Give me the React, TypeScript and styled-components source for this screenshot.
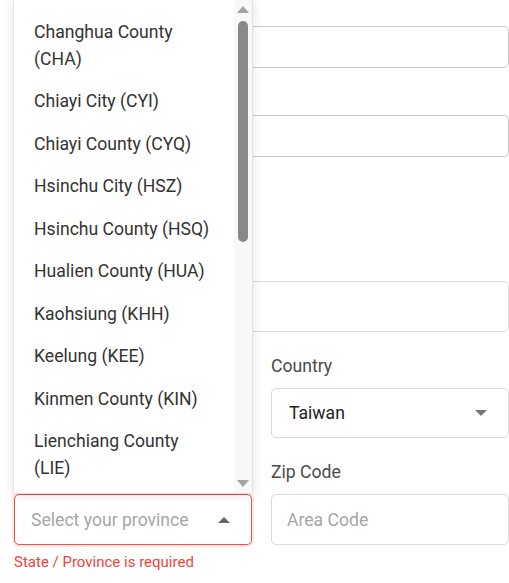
import React from "react";
import styled, { createGlobalStyle } from "styled-components";

const Global = createGlobalStyle`
  html, body { margin: 0; padding: 0; background: #fff; }
  body { font-family: Roboto, "Noto Sans", Arial, sans-serif; overflow: hidden; }
  * { box-sizing: border-box; }
`;

const Page = styled.div`
  width: 509px;
  height: 583px;
  padding: 26px 0 0 14px;
  overflow: hidden;
`;

const Form = styled.form`
  display: flex;
  flex-direction: column;
`;

const Field = styled.div<{ $top?: number }>`
  display: flex;
  flex-direction: column;
  margin-top: ${(p) => p.$top ?? 0}px;
  position: relative;
`;

const Label = styled.label`
  font-size: 17.6px;
  line-height: 22px;
  color: #4a4a4a;
  margin-bottom: 11px;
`;

const TextInput = styled.input<{ $compact?: boolean }>`
  height: ${(p) => (p.$compact ? 42 : 51)}px;
  border: 1px solid ${(p) => (p.$compact ? "#c9c9c9" : "#dadada")};
  border-radius: 5px;
  padding: 0 15px;
  font: inherit;
  font-size: 17.6px;
  color: #222;
  background: #fff;
  outline: none;
  &::placeholder { color: #a6a6a6; }
`;

const Grid = styled.div`
  display: grid;
  grid-template-columns: 238px 238px;
  column-gap: 19px;
  row-gap: 23px;
  margin-top: 23px;
`;

const SelectBox = styled.div<{ $error?: boolean; $h?: number }>`
  height: ${(p) => p.$h ?? 51}px;
  border: 1px solid ${(p) => (p.$error ? "#f0524a" : "#dadada")};
  border-radius: 5px;
  box-shadow: ${(p) => (p.$error ? "0 0 0 2px rgba(244, 82, 74, 0.14)" : "none")};
  display: flex;
  align-items: center;
  justify-content: space-between;
  padding: 0 21px 0 16px;
  background: #fff;
  position: relative;
`;

const SelectValue = styled.span<{ $placeholder?: boolean }>`
  font-size: 17.6px;
  color: ${(p) => (p.$placeholder ? "#a6a6a6" : "#222")};
  padding-left: ${(p) => (p.$placeholder ? 0 : 1)}px;
`;

const Caret = styled.svg`
  width: 12px;
  height: 6px;
  flex: none;
`;

const ErrorText = styled.div`
  margin-top: 8px;
  font-size: 15px;
  line-height: 18px;
  color: #f0443a;
`;

const Menu = styled.div`
  position: absolute;
  left: -2px;
  bottom: calc(100% + 2px);
  width: 240px;
  height: 493px;
  background: #fff;
  border-left: 1px solid #e6e6e6;
  border-right: 1px solid #e2e2e2;
  box-shadow: 0 2px 10px rgba(0, 0, 0, 0.12);
  display: grid;
  grid-template-columns: 1fr 18px;
  z-index: 10;
`;

const List = styled.ul`
  list-style: none;
  margin: 0;
  padding: 11px 0 0;
  overflow: hidden;
`;

const Item = styled.li`
  font-size: 17.6px;
  line-height: 26.5px;
  padding: 8px 19px 8px 20px;
  color: #333;
`;

const Track = styled.div`
  background: #f8f8f8;
  display: flex;
  flex-direction: column;
  align-items: center;
  padding: 6px 0 6px;
`;

const Thumb = styled.div`
  width: 10px;
  height: 221px;
  border-radius: 5px;
  background: #898989;
  margin-top: 8px;
`;

const Spacer = styled.div`
  flex: 1;
`;

const Arrow = styled.svg`
  width: 12px;
  height: 7px;
  flex: none;
`;

const provinces = [
  "Changhua County (CHA)",
  "Chiayi City (CYI)",
  "Chiayi County (CYQ)",
  "Hsinchu City (HSZ)",
  "Hsinchu County (HSQ)",
  "Hualien County (HUA)",
  "Kaohsiung (KHH)",
  "Keelung (KEE)",
  "Kinmen County (KIN)",
  "Lienchiang County (LIE)",
];

export default function App() {
  return (
    <Page>
      <Global />
      <Form>
        <Field>
          <TextInput $compact aria-label="Street address" />
        </Field>
        <Field $top={47}>
          <TextInput $compact aria-label="Apartment" />
        </Field>
        <Field $top={124}>
          <TextInput aria-label="City" />
        </Field>
        <Grid>
          <div />
          <Field>
            <Label>Country</Label>
            <SelectBox $h={50}>
              <SelectValue>Taiwan</SelectValue>
              <Caret viewBox="0 0 12 6">
                <path d="M0 0h12L6 6z" fill="#777" />
              </Caret>
            </SelectBox>
          </Field>
          <Field $top={33}>
            <SelectBox $error>
              <Menu>
                <List>
                  {provinces.map((p) => (
                    <Item key={p}>{p}</Item>
                  ))}
                </List>
                <Track>
                  <Arrow viewBox="0 0 12 7">
                    <path d="M0 7L6 0l6 7z" fill="#a3a3a3" />
                  </Arrow>
                  <Thumb />
                  <Spacer />
                  <Arrow viewBox="0 0 12 7">
                    <path d="M0 0h12L6 7z" fill="#a3a3a3" />
                  </Arrow>
                </Track>
              </Menu>
              <SelectValue $placeholder>Select your province</SelectValue>
              <Caret viewBox="0 0 12 6">
                <path d="M0 6L6 0l6 6z" fill="#666" />
              </Caret>
            </SelectBox>
            <ErrorText>State / Province is required</ErrorText>
          </Field>
          <Field>
            <Label>Zip Code</Label>
            <TextInput placeholder="Area Code" />
          </Field>
        </Grid>
      </Form>
    </Page>
  );
}
